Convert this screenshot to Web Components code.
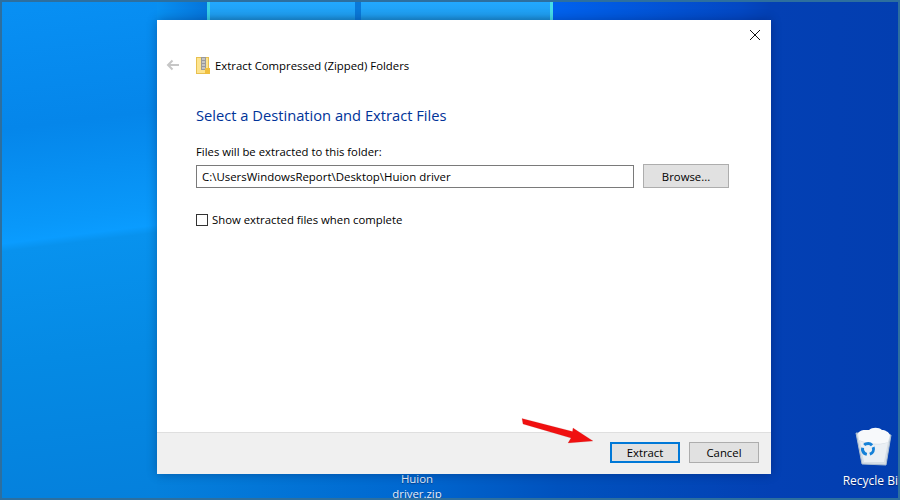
<!DOCTYPE html>
<html lang="en">
<head>
<meta charset="UTF-8">
<title>Extract Compressed (Zipped) Folders</title>
<style>
    html, body { margin: 0; height: 100%; }
    body { font-family: "Open Sans", "Noto Sans", sans-serif; overflow: hidden; }
</style>
<script>
    class WinDesktop extends HTMLElement {
        constructor() {
            super();
            this.attachShadow({ mode: 'open' }).innerHTML = `
            <style>
                :host {
                    display: flex;
                    justify-content: center;
                    position: relative;
                    width: 900px;
                    height: 500px;
                    overflow: hidden;
                    box-sizing: border-box;
                    padding: 20px 129px 26px 157px;
                    background: linear-gradient(90deg, #0a90ee 0%, #0580dc 17.4%, #0068d0 45%, #0052be 62%, #0340b4 86%, #033eb0 100%);
                }
                .left { position: absolute; left: 0; top: 0; bottom: 0; width: 157px;
                    background: linear-gradient(173deg, #0890f4 0%, #0586ea 25%, #0998fa 44%, #0a9cff 47%, #0892ee 48.500%, #058ae4 70%, #0580dc 100%); }
                .top-left { position: absolute; left: 157px; top: 0; width: 50px; height: 20px;
                    background: linear-gradient(90deg, #0890f2 0%, #0574da 100%); }
                .right { position: absolute; left: 553px; width: 218px; top: 0; height: 20px;
                    background: linear-gradient(90deg, #0062ee 0%, #0348c4 85%, #0340b4 100%); }
                .frame { position: absolute; inset: 0; border: 2px solid #2d6f9f; z-index: 3; pointer-events: none; }
                .pane { position: absolute; top: 2px; height: 18px; background: linear-gradient(180deg, #22a8ff 0%, #1f9ef0 70%, #1a90d8 100%); }
                .p1 { left: 207px; width: 145px; border-left: 3px solid #39cfe8; }
                .p2 { left: 361px; width: 189px; border-right: 3px solid #46dce8; }
                .gap { position: absolute; top: 2px; left: 355px; width: 6px; height: 18px; background: #0a78d8; }
                .win { position: relative; }
            </style>
            <div class="left"></div>
            <div class="top-left"></div>
            <div class="right"></div>
            <div class="pane p1"></div><div class="gap"></div><div class="pane p2"></div>
            <slot name="icons"></slot>
            <div class="win"><slot></slot></div>
            <slot name="over"></slot>
            <div class="frame"></div>`;
        }
    }

    class DesktopIcon extends HTMLElement {
        constructor() {
            super();
            this.attachShadow({ mode: 'open' }).innerHTML = `
            <style>
                :host {
                    position: absolute;
                    display: flex;
                    flex-direction: column;
                    align-items: center;
                    width: 76px;
                    color: #e6edf8;
                    font: 11.4px/15px "Open Sans", sans-serif;
                    text-align: center;
                    text-shadow: 0 1px 1px rgba(0,0,40,.45);
                }
            </style>
            <slot name="art"></slot>
            <slot></slot>`;
        }
    }

    class WizardDialog extends HTMLElement {
        constructor() {
            super();
            this.attachShadow({ mode: 'open' }).innerHTML = `
            <style>
                :host {
                    display: flex;
                    flex-direction: column;
                    width: 614px;
                    height: 454px;
                    background: #fff;
                    box-shadow: 0 0 10px rgba(0,0,40,.3);
                }
                .body { flex: 1; display: flex; flex-direction: column; }
                .foot {
                    box-sizing: border-box;
                    height: 42px;
                    border-top: 1px solid #dfdfdf;
                    background: #f0f0f0;
                    display: flex;
                    justify-content: flex-end;
                    align-items: flex-start;
                    gap: 9px;
                    padding: 9px 12px 0 0;
                }
            </style>
            <div class="body"><slot></slot></div>
            <div class="foot"><slot name="foot"></slot></div>`;
        }
    }

    class WinButton extends HTMLElement {
        constructor() {
            super();
            this.attachShadow({ mode: 'open' }).innerHTML = `
            <style>
                :host {
                    display: flex;
                    align-items: center;
                    justify-content: center;
                    box-sizing: border-box;
                    width: 70px;
                    height: 21px;
                    background: #e1e1e1;
                    border: 1px solid #adadad;
                    color: #000;
                    font: 11.35px "Open Sans", sans-serif;
                }
                :host([primary]) { border: 2px solid #0078d7; }
                :host([wide]) { width: 86px; height: 24px; }
            </style>
            <slot></slot>`;
        }
    }

    class WinCheckbox extends HTMLElement {
        constructor() {
            super();
            this.attachShadow({ mode: 'open' }).innerHTML = `
            <style>
                :host { display: flex; align-items: center; gap: 4px; font: 11.35px/14px "Open Sans", sans-serif; color: #000; }
                i { width: 10px; height: 10px; border: 1px solid #333; background: #fff; display: block; }
            </style>
            <i></i><slot></slot>`;
        }
    }

    customElements.define('win-desktop', WinDesktop);
    customElements.define('desktop-icon', DesktopIcon);
    customElements.define('wizard-dialog', WizardDialog);
    customElements.define('win-button', WinButton);
    customElements.define('win-checkbox', WinCheckbox);
</script>
</head>
<body>
<style>
    .top { display: flex; align-items: center; height: 16px; padding: 37px 0 0 9px; font: 11.35px "Open Sans", sans-serif; color: #000; }
    .top svg.back { margin-right: 17px; }
    .top svg.zip { margin-right: 5px; }
    .close { position: absolute; right: 10px; top: 9px; display: block; }
    h1 { margin: 32px 0 0 39px; font: 400 14.7px/20px "Open Sans", sans-serif; color: #003399; }
    .lbl { margin: 20px 0 0 39px; font: 11.3px/14px "Open Sans", sans-serif; color: #000; }
    .row { display: flex; gap: 9px; margin: 5px 42px 0 39px; align-items: flex-end; }
    .path { flex: 1; box-sizing: border-box; height: 23px; border: 1px solid #7a7a7a; padding-left: 5px; font: 11.45px/21px "Open Sans", sans-serif; color: #000; }
    win-checkbox { margin: 25px 0 0 39px; }
</style>
<win-desktop>
    <desktop-icon slot="icons" style="left:379px;top:471px">Huion<br>driver.zip</desktop-icon>
    <desktop-icon slot="icons" style="left:836px;top:427px">
        <svg slot="art" width="38" height="40" viewBox="0 0 38 40" style="filter:blur(.35px)">
            <path d="M1 6 L36 8 L31 38 L7 37 Z" fill="#d6dee6" stroke="#aebfd0" stroke-width="1"/>
            <path d="M3 6 C6 2 11 3 14 3 C17 0 24 0 27 3 C30 3 34 5 35 8 L33 15 C26 18 12 17 4 13 Z" fill="#f7f9fb"/>
            <path d="M5 14 C12 18 26 19 33 15 L29 35 L9 35 Z" fill="#eaeff4"/>
            <circle cx="13" cy="22" r="5.500" fill="none" stroke="#1481d8" stroke-width="3" stroke-dasharray="8.500 3" transform="rotate(-20 13 22)"/>
        </svg>
        <span style="font-size:12px;margin-top:6px;white-space:nowrap;color:#fff">Recycle Bin</span>
    </desktop-icon>
    <wizard-dialog>
        <svg class="close" width="12" height="12" viewBox="0 0 12 12"><path d="M1 1 L11 11 M11 1 L1 11" stroke="#111" stroke-width="1" fill="none"/></svg>
        <div class="top">
            <svg class="back" width="13" height="12" viewBox="0 0 13 12"><path d="M13 6 H2 M6.500 1.500 L2 6 L6.500 10.500" stroke="#c6c6c6" stroke-width="2" fill="none"/></svg>
            <svg class="zip" width="14" height="17" viewBox="0 0 14 17">
                <rect x="0.5" y="0.5" width="12" height="16" fill="#fde48f" stroke="#e8c050"/>
                <rect x="5" y="0" width="5" height="13" fill="#9a9a9a"/>
                <path d="M6 2 H9 M6 5 H9 M6 8 H9 M6 11 H9" stroke="#eee"/>
                <rect x="9" y="11" width="5" height="6" fill="#f0bf3e"/>
            </svg>
            Extract Compressed (Zipped) Folders
        </div>
        <h1>Select a Destination and Extract Files</h1>
        <div class="lbl">Files will be extracted to this folder:</div>
        <div class="row">
            <div class="path">C:\UsersWindowsReport\Desktop\Huion driver</div>
            <win-button wide>Browse...</win-button>
        </div>
        <win-checkbox>Show extracted files when complete</win-checkbox>
        <win-button slot="foot" primary>Extract</win-button>
        <win-button slot="foot">Cancel</win-button>
    </wizard-dialog>
    <svg slot="over" style="position:absolute;left:520px;top:416px;z-index:2" width="76" height="30" viewBox="0 0 76 30">
        <path d="M2 2.500 L3 8 L51 22 L48 27 L73 25 L53 12 L52.500 15.500 Z" fill="#f01010" stroke="#b02020" stroke-opacity=".25" stroke-width=".6"/>
    </svg>
</win-desktop>
</body>
</html>
